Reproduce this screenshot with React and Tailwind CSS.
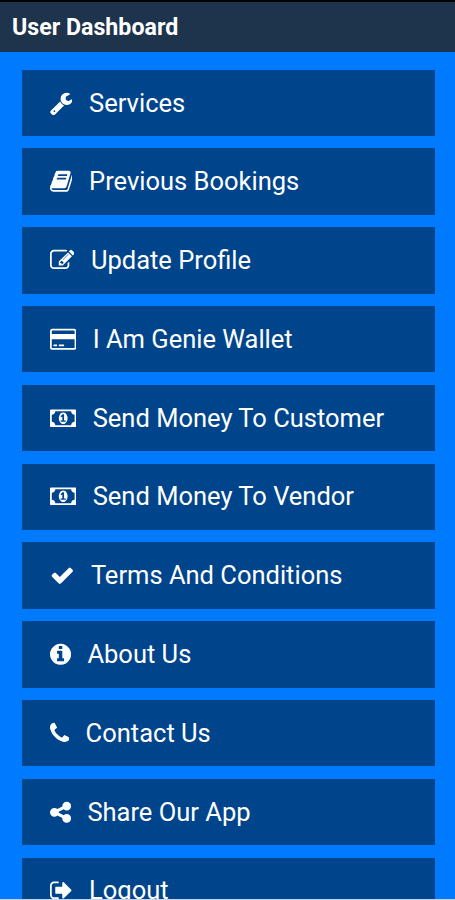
import React from 'react';

// Icon glyphs on a 1792 unit grid, each with its own left offset and advance width
const icons = {
  wrench: {
    viewBox: '64 0 1664 1792',
    size: 'w-[22.8px]',
    path: 'M448 1472q0-26-19-45t-45-19-45 19-19 45 19 45 45 19 45-19 19-45zm644-420l-682 682q-37 37-90 37-52 0-91-37l-106-108q-38-36-38-90 0-53 38-91l681-681q39 98 114.5 173.5t173.5 114.5zm634-435q0 39-23 106-47 134-164.5 217.5t-258.5 83.5q-185 0-316.5-131.5t-131.5-316.5 131.5-316.5 316.5-131.5q58 0 121.5 16.5t107.5 46.5q16 11 16 28t-16 28l-293 169v224l193 107q5-3 79-48.5t135.5-81 70.5-35.5q15 0 23.5 10t8.5 25z',
  },
  book: {
    viewBox: '64 0 1664 1792',
    size: 'w-[22.8px]',
    path: 'M1703 478q40 57 18 129l-275 906q-19 64-76.5 107.5t-122.5 43.5h-923q-77 0-148.5-53.5t-99.5-131.5q-24-67-2-127 0-4 3-27t4-37q1-8-3-21.5t-3-19.5q2-11 8-21t16.5-23.5 16.5-23.5q23-38 45-91.5t30-91.5q3-10 .5-30t-.5-28q3-11 17-28t17-23q21-36 42-92t25-90q1-9-2.5-32t.5-28q4-13 22-30.5t22-22.5q19-26 42.5-84.5t27.5-96.5q1-8-3-25.5t-2-26.5q2-8 9-18t18-23 17-21q8-12 16.5-30.5t15-35 16-36 19.5-32 26.5-23.5 36-11.5 47.5 5.5l-1 3q38-9 51-9h761q74 0 114 56t18 130l-274 906q-36 119-71.5 153.5t-128.5 34.5h-869q-27 0-38 15-11 16-1 43 24 70 144 70h923q29 0 56-15.5t35-41.5l300-987q7-22 5-57 38 15 59 43zm-1064 2q-4 13 2 22.5t20 9.5h608q13 0 25.5-9.5t16.5-22.5l21-64q4-13-2-22.5t-20-9.5h-608q-13 0-25.5 9.5t-16.5 22.5zm-83 256q-4 13 2 22.5t20 9.5h608q13 0 25.5-9.5t16.5-22.5l21-64q4-13-2-22.5t-20-9.5h-608q-13 0-25.5 9.5t-16.5 22.5z',
  },
  edit: {
    viewBox: '0 0 1792 1792',
    size: 'w-[24.6px]',
    path: 'M888 1184l116-116-152-152-116 116v56h96v96h56zm440-720q-16-16-33 1l-350 350q-17 17-1 33t33-1l350-350q17-17 1-33zm80 594v190q0 119-84.5 203.5t-203.5 84.5h-832q-119 0-203.5-84.5t-84.5-203.5v-832q0-119 84.5-203.5t203.5-84.5h832q63 0 117 25 15 7 18 23 3 17-9 29l-49 49q-14 14-32 8-23-6-45-6h-832q-66 0-113 47t-47 113v832q0 66 47 113t113 47h832q66 0 113-47t47-113v-126q0-13 9-22l64-64q15-15 35-7t20 29zm-96-738l288 288-672 672h-288v-288zm444 132l-92 92-288-288 92-92q28-28 68-28t68 28l152 152q28 28 28 68t-28 68z',
  },
  card: {
    viewBox: '0 0 1920 1792',
    size: 'w-[26.4px]',
    path: 'M1760 128q66 0 113 47t47 113v1216q0 66-47 113t-113 47h-1600q-66 0-113-47t-47-113v-1216q0-66 47-113t113-47h1600zm-1600 128q-13 0-22.5 9.5t-9.5 22.5v224h1664v-224q0-13-9.5-22.5t-22.5-9.5h-1600zm1600 1280q13 0 22.5-9.5t9.5-22.5v-608h-1664v608q0 13 9.5 22.5t22.5 9.5h1600zm-1504-128v-128h256v128h-256zm384 0v-128h384v128h-384z',
  },
  money: {
    viewBox: '0 0 1920 1792',
    size: 'w-[26.4px]',
    path: 'M768 1152h384v-96h-128v-448h-114l-148 137 77 80q42-37 55-57h2v288h-128v96zm512-256q0 70-21 142t-59.5 134-101.5 101-138 39-138-39-101.5-101-59.5-134-21-142 21-142 59.5-134 101.5-101 138-39 138 39 101.5 101 59.5 134 21 142zm512 256v-512q-106 0-181-75t-75-181h-1152q0 106-75 181t-181 75v512q106 0 181 75t75 181h1152q0-106 75-181t181-75zm128-832v1152q0 26-19 45t-45 19h-1792q-26 0-45-19t-19-45v-1152q0-26 19-45t45-19h1792q26 0 45 19t19 45z',
  },
  check: {
    viewBox: '0 0 1792 1792',
    size: 'w-[24.6px]',
    path: 'M1671 566q0 40-28 68l-724 724-136 136q-28 28-68 28t-68-28l-136-136-362-362q-28-28-28-68t28-68l136-136q28-28 68-28t68 28l294 295 656-657q28-28 68-28t68 28l136 136q28 28 28 68z',
  },
  info: {
    viewBox: '128 0 1536 1792',
    size: 'w-[21.1px]',
    path: 'M1152 1376v-160q0-14-9-23t-23-9h-96v-512q0-14-9-23t-23-9h-320q-14 0-23 9t-9 23v160q0 14 9 23t23 9h96v320h-96q-14 0-23 9t-9 23v160q0 14 9 23t23 9h448q14 0 23-9t9-23zm-128-896v-160q0-14-9-23t-23-9h-192q-14 0-23 9t-9 23v160q0 14 9 23t23 9h192q14 0 23-9t9-23zm640 416q0 209-103 385.5t-279.5 279.5-385.5 103-385.5-103-279.5-279.5-103-385.5 103-385.5 279.5-279.5 385.5-103 385.5 103 279.5 279.5 103 385.5z',
  },
  phone: {
    viewBox: '192 0 1408 1792',
    size: 'w-[19.3px]',
    path: 'M1600 1240q0 27-10 70.5t-21 68.5q-21 50-122 106-94 51-186 51-27 0-53-3.5t-57.5-12.5-47-14.5-55.5-20.5-49-18q-98-35-175-83-127-79-264-216t-216-264q-48-77-83-175-3-9-18-49t-20.5-55.5-14.5-47-12.5-57.5-3.5-53q0-92 51-186 56-101 106-122 25-11 68.5-21t70.5-10q14 0 21 3 18 6 53 76 11 19 30 54t35 63.5 31 53.5q3 4 17.5 25t21.5 35.5 7 28.5q0 20-28.5 50t-62 55-62 53-28.5 46q0 9 5 22.5t8.5 20.5 14 24 11.5 19q76 137 174 235t235 174q2 1 19 11.5t24 14 20.5 8.5 22.5 5q18 0 46-28.5t53-62 55-62 50-28.5q14 0 28.5 7t35.5 21.5 25 17.5q25 15 53.5 31t63.5 35 54 30q70 35 76 53 3 7 3 21z',
  },
  share: {
    viewBox: '128 0 1536 1792',
    size: 'w-[21.1px]',
    path: 'M1344 1024q133 0 226.5 93.5t93.5 226.5-93.5 226.5-226.5 93.5-226.5-93.5-93.5-226.5q0-12 2-34l-360-180q-92 86-218 86-133 0-226.5-93.5t-93.5-226.5 93.5-226.5 226.5-93.5q126 0 218 86l360-180q-2-22-2-34 0-133 93.5-226.5t226.5-93.5 226.5 93.5 93.5 226.5-93.5 226.5-226.5 93.5q-126 0-218-86l-360 180q2 22 2 34t-2 34l360 180q92-86 218-86z',
  },
  logout: {
    viewBox: '64 0 1664 1792',
    size: 'w-[22.8px]',
    path: 'M704 1440q0 4 1 20t.5 26.5-3 23.5-10 19.5-20.5 6.5h-320q-119 0-203.5-84.5t-84.5-203.5v-704q0-119 84.5-203.5t203.5-84.5h320q13 0 22.5 9.5t9.5 22.5q0 4 1 20t.5 26.5-3 23.5-10 19.5-20.5 6.5h-320q-66 0-113 47t-47 113v704q0 66 47 113t113 47h312l11.5 1 11.5 3 8 5.5 7 9 2 13.5zm928-544q0 26-19 45l-544 544q-19 19-45 19t-45-19-19-45v-288h-448q-26 0-45-19t-19-45v-384q0-26 19-45t45-19h448v-288q0-26 19-45t45-19 45 19l544 544q19 19 19 45z',
  },
};

const menuItems = [
  { label: 'Services', icon: 'wrench' },
  { label: 'Previous Bookings', icon: 'book' },
  { label: 'Update Profile', icon: 'edit' },
  { label: 'I Am Genie Wallet', icon: 'card' },
  { label: 'Send Money To Customer', icon: 'money' },
  { label: 'Send Money To Vendor', icon: 'money' },
  { label: 'Terms And Conditions', icon: 'check' },
  { label: 'About Us', icon: 'info' },
  { label: 'Contact Us', icon: 'phone' },
  { label: 'Share Our App', icon: 'share' },
  { label: 'Logout', icon: 'logout' },
];

const MenuItem = ({ label, icon }) => {
  const { viewBox, size, path } = icons[icon];

  return (
    <a className="flex h-[66.4px] shrink-0 items-center gap-[16.8px] bg-[#00458b] pl-[27.5px]">
      <svg className={`h-[24.6px] shrink-0 ${size}`} viewBox={viewBox} fill="currentColor" aria-hidden="true">
        <path d={path} />
      </svg>
      <span className="pb-[0.6px] text-[25.5px] leading-[26px] whitespace-nowrap">{label}</span>
    </a>
  );
};

const App = () => {
  return (
    <div className="flex h-[900px] w-[455px] flex-col overflow-hidden border-b border-[#c5d3ee] bg-[#007bff] font-['Roboto',sans-serif] text-white">
      {/* Header */}
      <header className="flex h-[52px] shrink-0 items-center border-t-2 border-black bg-[#1e334c] pl-3">
        <h1 className="text-[23.2px] leading-6 font-bold">User Dashboard</h1>
      </header>

      {/* Menu */}
      <nav className="flex min-h-0 flex-1 flex-col gap-[12.4px] overflow-hidden pt-[17.7px] pr-5 pl-[22px]">
        {menuItems.map((item) => (
          <MenuItem key={item.label} label={item.label} icon={item.icon} />
        ))}
      </nav>
    </div>
  );
};

export default App;
